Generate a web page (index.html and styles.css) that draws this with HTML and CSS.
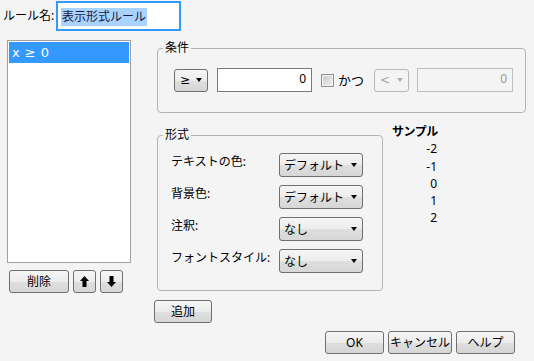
FILE: index.html
```html
<!DOCTYPE html>
<html lang="ja">
<head>
  <meta charset="UTF-8" />
  <title>表示形式ルール</title>
  <link rel="stylesheet" href="styles.css">
</head>
<body>
  <div class="name-row">
    <label class="name-label">ルール名:</label>
    <div class="name-input"><span class="sel">表示形式ルール</span></div>
  </div>

  <div class="main">
    <div class="left-col">
      <ul class="rule-list">
        <li class="selected">x ≥ 0</li>
      </ul>
      <div class="list-buttons">
        <button class="btn btn-delete">削除</button>
        <button class="btn btn-icon" title="上へ">
          <svg width="9" height="11" viewBox="0 0 9 11"><polygon points="4.5,0 9,5 6.5,5 6.5,11 2.5,11 2.5,5 0,5" fill="#000"/></svg>
        </button>
        <button class="btn btn-icon" title="下へ">
          <svg width="9" height="11" viewBox="0 0 9 11"><polygon points="2.5,0 6.5,0 6.5,6 9,6 4.5,11 0,6 2.5,6" fill="#000"/></svg>
        </button>
      </div>
    </div>

    <div class="right-col">
      <fieldset class="group cond">
        <legend>条件</legend>
        <div class="cond-row">
          <button class="combo combo-op"><span class="op">≥</span><span class="caret"></span></button>
          <div class="num-input">0</div>
          <span class="check"></span>
          <span class="check-label">かつ</span>
          <button class="combo combo-op disabled"><span class="op">&lt;</span><span class="caret"></span></button>
          <div class="num-input disabled">0</div>
        </div>
      </fieldset>

      <div class="format-row">
        <fieldset class="group format">
          <legend>形式</legend>
          <div class="fields">
            <div class="field">
              <span class="field-label">テキストの色:</span>
              <button class="combo combo-wide"><span>デフォルト</span><span class="caret"></span></button>
            </div>
            <div class="field">
              <span class="field-label">背景色:</span>
              <button class="combo combo-wide"><span>デフォルト</span><span class="caret"></span></button>
            </div>
            <div class="field">
              <span class="field-label">注釈:</span>
              <button class="combo combo-wide"><span>なし</span><span class="caret"></span></button>
            </div>
            <div class="field">
              <span class="field-label">フォントスタイル:</span>
              <button class="combo combo-wide"><span>なし</span><span class="caret"></span></button>
            </div>
          </div>
        </fieldset>

        <div class="sample">
          <div class="sample-title">サンプル</div>
          <div class="sample-value">-2</div>
          <div class="sample-value">-1</div>
          <div class="sample-value">0</div>
          <div class="sample-value">1</div>
          <div class="sample-value">2</div>
        </div>
      </div>

      <button class="btn btn-add">追加</button>
    </div>
  </div>

  <div class="footer">
    <button class="btn btn-ok">OK</button>
    <button class="btn btn-cancel">キャンセル</button>
    <button class="btn btn-help">ヘルプ</button>
  </div>
</body>
</html>
```

FILE: styles.css
```css
:root {
  --bg: #f4f4f4;
  --border: #707070;
  --group-border: #b4b4b4;
  --select: #3399ff;
}

* {
  box-sizing: border-box;
}

body {
  margin: 0;
  background: var(--bg);
  color: #000;
  font-family: "Noto Sans", "Noto Sans CJK JP", sans-serif;
  font-size: 12px;
  line-height: 14px;
  width: 534px;
  height: 361px;
  overflow: hidden;
}

/* rule name */
.name-row {
  display: flex;
  align-items: center;
  padding: 1px 0 0 3px;
  height: 31px;
}

.name-label {
  width: 53px;
  font-size: 12px;
}

.name-input {
  width: 125px;
  height: 30px;
  border: 2px solid var(--select);
  background: #fff;
  padding: 5px 0 0 3px;
}

.name-input .sel {
  display: inline-block;
  background: #a9d3ff;
  color: #1b1b3a;
  font-size: 12px;
  line-height: 18px;
  padding: 0 1px;
}

/* main area */
.main {
  display: flex;
  margin-top: 9px;
}

.left-col {
  padding-left: 7px;
  width: 131px;
}

.rule-list {
  list-style: none;
  margin: 0;
  padding: 1px;
  width: 124px;
  height: 223px;
  background: #fff;
  border: 1px solid #a0a0a0;
}

.rule-list li {
  height: 21px;
  line-height: 21px;
  padding-left: 3px;
  font-family: "DejaVu Sans", "Noto Sans", sans-serif;
  font-size: 13px;
  word-spacing: 1px;
}

.rule-list .selected {
  background: var(--select);
  color: #fff;
}

.list-buttons {
  display: flex;
  gap: 4px;
  margin: 7px 0 0 2px;
}

/* buttons */
.btn {
  height: 23px;
  border: 1px solid var(--border);
  border-radius: 3px;
  background: linear-gradient(#f6f6f6, #ececec 50%, #dfdfdf 51%, #d6d6d6);
  font-family: inherit;
  font-size: 12px;
  line-height: 14px;
  color: #000;
  padding: 0;
}

.btn-delete { width: 60px; }

.btn-icon {
  width: 23px;
  display: flex;
  align-items: center;
  justify-content: center;
}

.btn-add {
  width: 58px;
  margin: 9px 0 0 -3px;
  display: block;
}

.right-col {
  margin: 1px 0 0 26px;
}

/* groups */
.group {
  margin: 0;
  padding: 0;
  min-width: 0;
  border: 1px solid var(--group-border);
  border-radius: 4px;
}

.group legend {
  margin-left: 5px;
  padding: 0 2px;
  line-height: 14px;
}

.cond {
  width: 369px;
}

.cond-row {
  display: flex;
  align-items: center;
  padding: 13px 0 20px 16px;
}

.combo {
  height: 23px;
  border: 1px solid var(--border);
  border-radius: 3px;
  background: linear-gradient(#f6f6f6, #ececec 50%, #dfdfdf 51%, #d6d6d6);
  font-family: inherit;
  font-size: 12px;
  color: #000;
  display: flex;
  align-items: center;
  justify-content: space-between;
  padding: 0 5px 0 4px;
}

.combo .op {
  font-family: "DejaVu Sans", sans-serif;
  font-size: 12px;
}

.caret {
  width: 0;
  height: 0;
  border-left: 3.5px solid transparent;
  border-right: 3.5px solid transparent;
  border-top: 4px solid #000;
}

.combo-op {
  width: 34px;
  padding-left: 5px;
}

.combo.disabled {
  width: 35px;
  border-color: #b9b9b9;
  background: var(--bg);
  color: #a3a3a3;
  margin-left: 10px;
}

.combo.disabled .caret {
  border-top-color: #b0b0b0;
}

.num-input {
  width: 95px;
  height: 24px;
  margin-left: 9px;
  background: #fff;
  border: 1px solid #7a7a7a;
  text-align: right;
  padding: 3px 5px 0 0;
}

.num-input.disabled {
  width: 96px;
  margin-left: 8px;
  background: var(--bg);
  border-color: #bdbdbd;
  color: #999;
}

.check {
  width: 13px;
  height: 13px;
  margin-left: 9px;
  border: 1px solid #8e8f8f;
  box-shadow: inset 0 0 0 1px #f4f4f4;
  background: linear-gradient(135deg, #c8c8c8, #f2f2f2);
}

.check-label {
  margin-left: 4px;
  font-size: 13px;
}

/* format */
.format-row {
  display: flex;
  align-items: flex-start;
  margin-top: 10px;
}

.format {
  width: 226px;
  margin-top: 5px;
}

.fields {
  padding: 11px 19px 17px 13px;
}

.field {
  display: flex;
  align-items: flex-start;
  height: 24px;
  margin-bottom: 8px;
}

.field:last-child {
  margin-bottom: 0;
}

.field-label {
  width: 108px;
  padding-top: 2px;
}

.combo-wide {
  width: 84px;
  height: 24px;
}

.sample {
  width: 46px;
  margin-left: 9px;
  line-height: 17.3px;
  white-space: nowrap;
}

.sample-title {
  font-weight: bold;
  letter-spacing: -0.5px;
}

.sample-value {
  text-align: right;
  padding-right: 1px;
}

/* footer */
.footer {
  display: flex;
  justify-content: flex-end;
  gap: 4px;
  margin-top: 8px;
  padding-right: 19px;
}

.btn-ok { width: 59px; }
.btn-cancel { width: 64px; }
.btn-help { width: 59px; }
```
